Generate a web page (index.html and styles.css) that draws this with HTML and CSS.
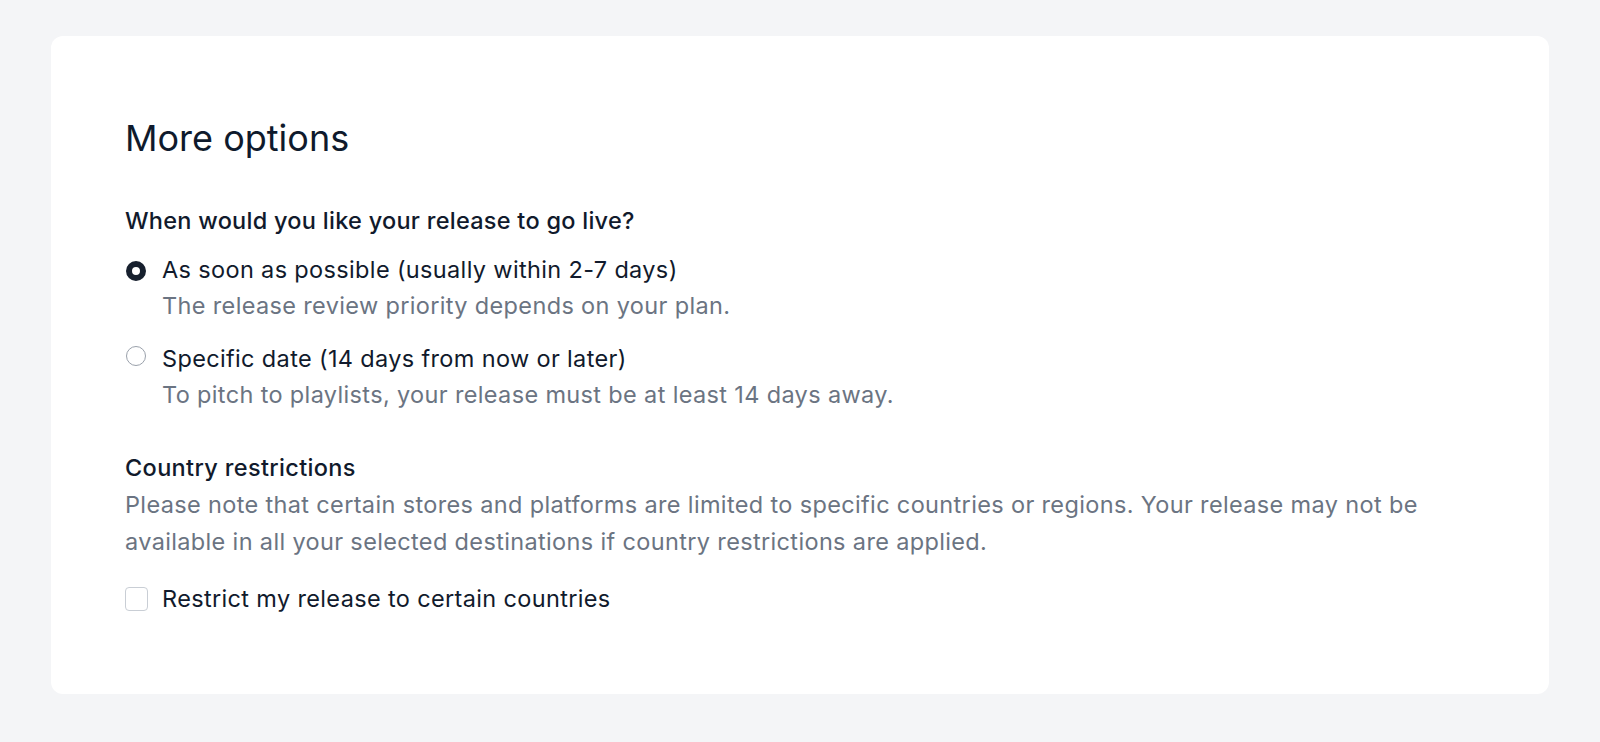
FILE: index.html
```html
<!DOCTYPE html>
<html lang="en">
<head>
<meta charset="utf-8">
<title>More options</title>
<link rel="stylesheet" href="styles.css">
</head>
<body>
<main class="page">
  <section class="card">
    <h2 class="title">More options</h2>
    <fieldset class="group">
      <legend class="question">When would you like your release to go live?</legend>
      <label class="option">
        <span class="radio radio-checked"></span>
        <span class="option-text">
          <span class="option-label">As soon as possible (usually within 2-7 days)</span>
          <span class="option-help">The release review priority depends on your plan.</span>
        </span>
      </label>
      <label class="option">
        <span class="radio"></span>
        <span class="option-text">
          <span class="option-label">Specific date (14 days from now or later)</span>
          <span class="option-help">To pitch to playlists, your release must be at least 14 days away.</span>
        </span>
      </label>
    </fieldset>
    <div class="restrictions">
      <h3 class="subtitle">Country restrictions</h3>
      <p class="note">Please note that certain stores and platforms are limited to specific countries or regions. Your release may not be available in all your selected destinations if country restrictions are applied.</p>
      <label class="check">
        <span class="checkbox"></span>
        <span class="option-label">Restrict my release to certain countries</span>
      </label>
    </div>
  </section>
</main>
</body>
</html>
```

FILE: styles.css
```css
* { box-sizing: border-box; }
html, body { margin: 0; padding: 0; }
body {
  background: #f4f5f7;
  font-family: Inter, "Noto Sans", "Liberation Sans", sans-serif;
  color: #111a2c;
}
.page {
  padding: 36px 51px 49px;
}
.card {
  background: #ffffff;
  border-radius: 12px;
  padding: 80px 74px 77px;
}
.title {
  margin: 0;
  font-size: 36px;
  font-weight: 400;
  line-height: 44px;
  color: #0f1a2c;
}
.group {
  border: 0;
  margin: 42px 0 0;
  padding: 0;
}
.question {
  padding: 0;
  font-size: 23.5px;
  line-height: 37px;
  letter-spacing: 0.27px;
  font-weight: 500;
  color: #111a2c;
  margin-bottom: 12px;
}
.option {
  display: flex;
  align-items: flex-start;
  gap: 16px;
  margin-bottom: 16px;
}
.option-text {
  display: flex;
  flex-direction: column;
}
.option-label {
  font-size: 23.5px;
  line-height: 37px;
  letter-spacing: 0.35px;
  color: #111a2c;
}
.option-help {
  font-size: 23.5px;
  line-height: 36px;
  letter-spacing: 0.35px;
  color: #6b7482;
}
.radio {
  flex: none;
  width: 20px;
  height: 20px;
  margin: 6px 0 0 1px;
  border-radius: 50%;
  border: 1px solid #9aa1ab;
  background: #fff;
}
.radio-checked {
  margin-top: 10px;
  border: 6px solid #17202e;
}
.restrictions {
  margin-top: 20px;
}
.subtitle {
  margin: 0;
  font-size: 23.5px;
  line-height: 37px;
  letter-spacing: 0.35px;
  font-weight: 500;
  color: #111a2c;
}
.note {
  margin: 0;
  font-size: 23.5px;
  line-height: 37px;
  letter-spacing: 0.35px;
  color: #6b7482;
}
.check {
  display: flex;
  align-items: center;
  gap: 14px;
  margin-top: 20px;
}
.checkbox {
  flex: none;
  width: 23px;
  height: 24px;
  border: 1px solid #c9ced5;
  border-radius: 4px;
  background: #fff;
}
```
